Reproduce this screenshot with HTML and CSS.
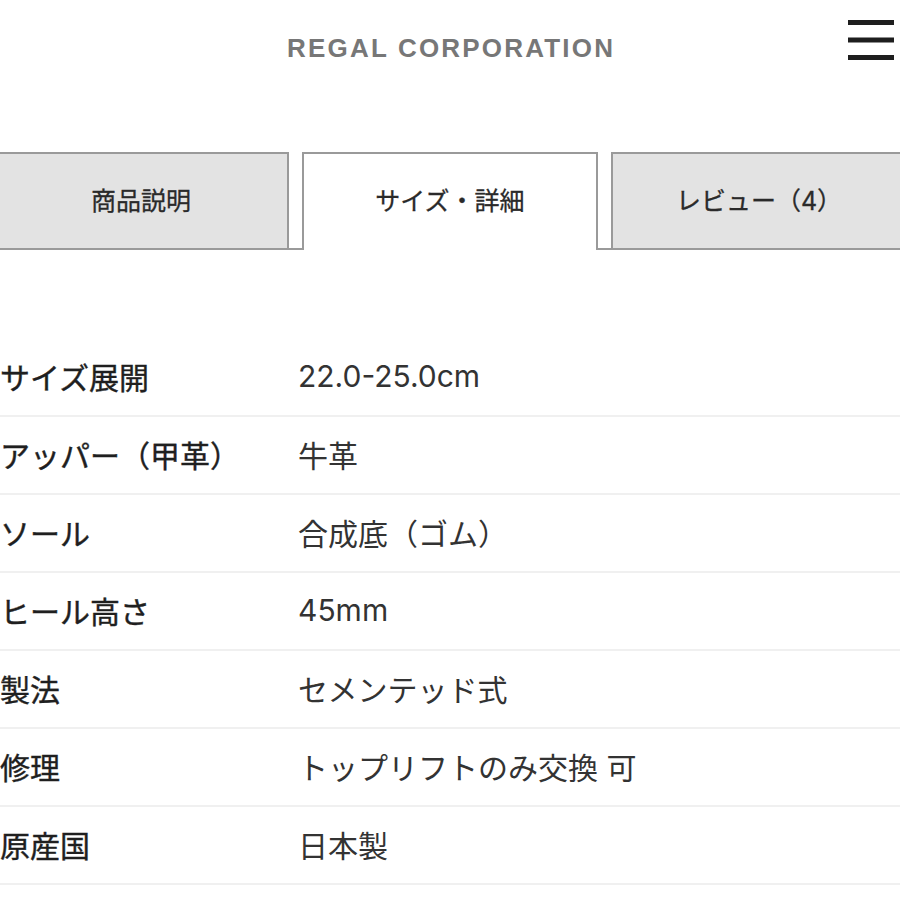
FILE: index.html
```html
<!DOCTYPE html>
<html lang="ja">
<head>
    <meta charset="UTF-8">
    <meta name="viewport" content="width=device-width, initial-scale=1.0">
    <title>REGAL CORPORATION</title>
    <link rel="stylesheet" href="styles.css">
</head>
<body>
    <header class="header">
        <div></div>
        <div class="logo">REGAL CORPORATION</div>
        <button class="menu-btn" aria-label="menu">
            <svg width="46" height="42" viewBox="0 0 46 42">
                <rect x="0" y="0" width="46" height="5" fill="#1e1e1e"/>
                <rect x="0" y="17.5" width="46" height="5" fill="#1e1e1e"/>
                <rect x="0" y="35" width="46" height="5" fill="#1e1e1e"/>
            </svg>
        </button>
    </header>

    <nav class="tabs">
        <div class="tab">商品説明</div>
        <div class="tab active">サイズ・詳細</div>
        <div class="tab">レビュー（4）</div>
    </nav>

    <!-- size / details table -->
    <div class="spec">
        <div class="spec-row"><div class="spec-label">サイズ展開</div><div class="spec-value">22.0-25.0cm</div></div>
        <div class="spec-row"><div class="spec-label">アッパー（甲革）</div><div class="spec-value">牛革</div></div>
        <div class="spec-row"><div class="spec-label">ソール</div><div class="spec-value">合成底（ゴム）</div></div>
        <div class="spec-row"><div class="spec-label">ヒール高さ</div><div class="spec-value">45mm</div></div>
        <div class="spec-row"><div class="spec-label">製法</div><div class="spec-value">セメンテッド式</div></div>
        <div class="spec-row"><div class="spec-label">修理</div><div class="spec-value">トップリフトのみ交換 可</div></div>
        <div class="spec-row"><div class="spec-label">原産国</div><div class="spec-value">日本製</div></div>
    </div>
</body>
</html>
```

FILE: styles.css
```css
body {
    margin: 0;
    background-color: #fff;
    font-family: Inter, "Noto Sans CJK JP", sans-serif;
    color: #333;
    overflow: hidden;
}
.header {
    display: grid;
    grid-template-columns: 1fr auto 1fr;
    align-items: center;
    height: 96px;
}
.logo {
    font-family: "Liberation Sans", Arial, sans-serif;
    font-weight: bold;
    font-size: 26px;
    letter-spacing: 2.2px;
    margin-right: -2.2px;
    color: #777;
}
.menu-btn {
    justify-self: end;
    align-self: start;
    margin-top: 20px;
    margin-right: 6px;
    padding: 0;
    border: none;
    background: none;
    line-height: 0;
}
.tabs {
    display: flex;
    gap: 13px;
    align-items: flex-end;
    margin-top: 56px;
    margin-left: -7px;
    width: 920px;
    border-bottom: 2px solid #9a9a9a;
}
.tab {
    flex: 0 0 296px;
    box-sizing: border-box;
    height: 96px;
    padding-bottom: 4px;
    display: flex;
    align-items: center;
    justify-content: center;
    background-color: #e3e3e3;
    border: 2px solid #9a9a9a;
    border-bottom: none;
    font-size: 25px;
    color: #2a2a2a;
    -webkit-text-stroke: 0.3px #2a2a2a;
}
.tab.active {
    background-color: #fff;
    height: 98px;
    margin-bottom: -2px;
    padding-bottom: 6px;
}
.spec {
    margin-top: 89px;
}
.spec-row {
    display: grid;
    grid-template-columns: 298px 1fr;
    align-items: center;
    height: 78px;
    padding-bottom: 2px;
    box-sizing: border-box;
    border-bottom: 2px solid #f0f0f0;
    font-size: 30px;
}
.spec-label {
    color: #1f1f1f;
    -webkit-text-stroke: 0.4px #1f1f1f;
}
.spec-value {
    color: #333;
}
```
